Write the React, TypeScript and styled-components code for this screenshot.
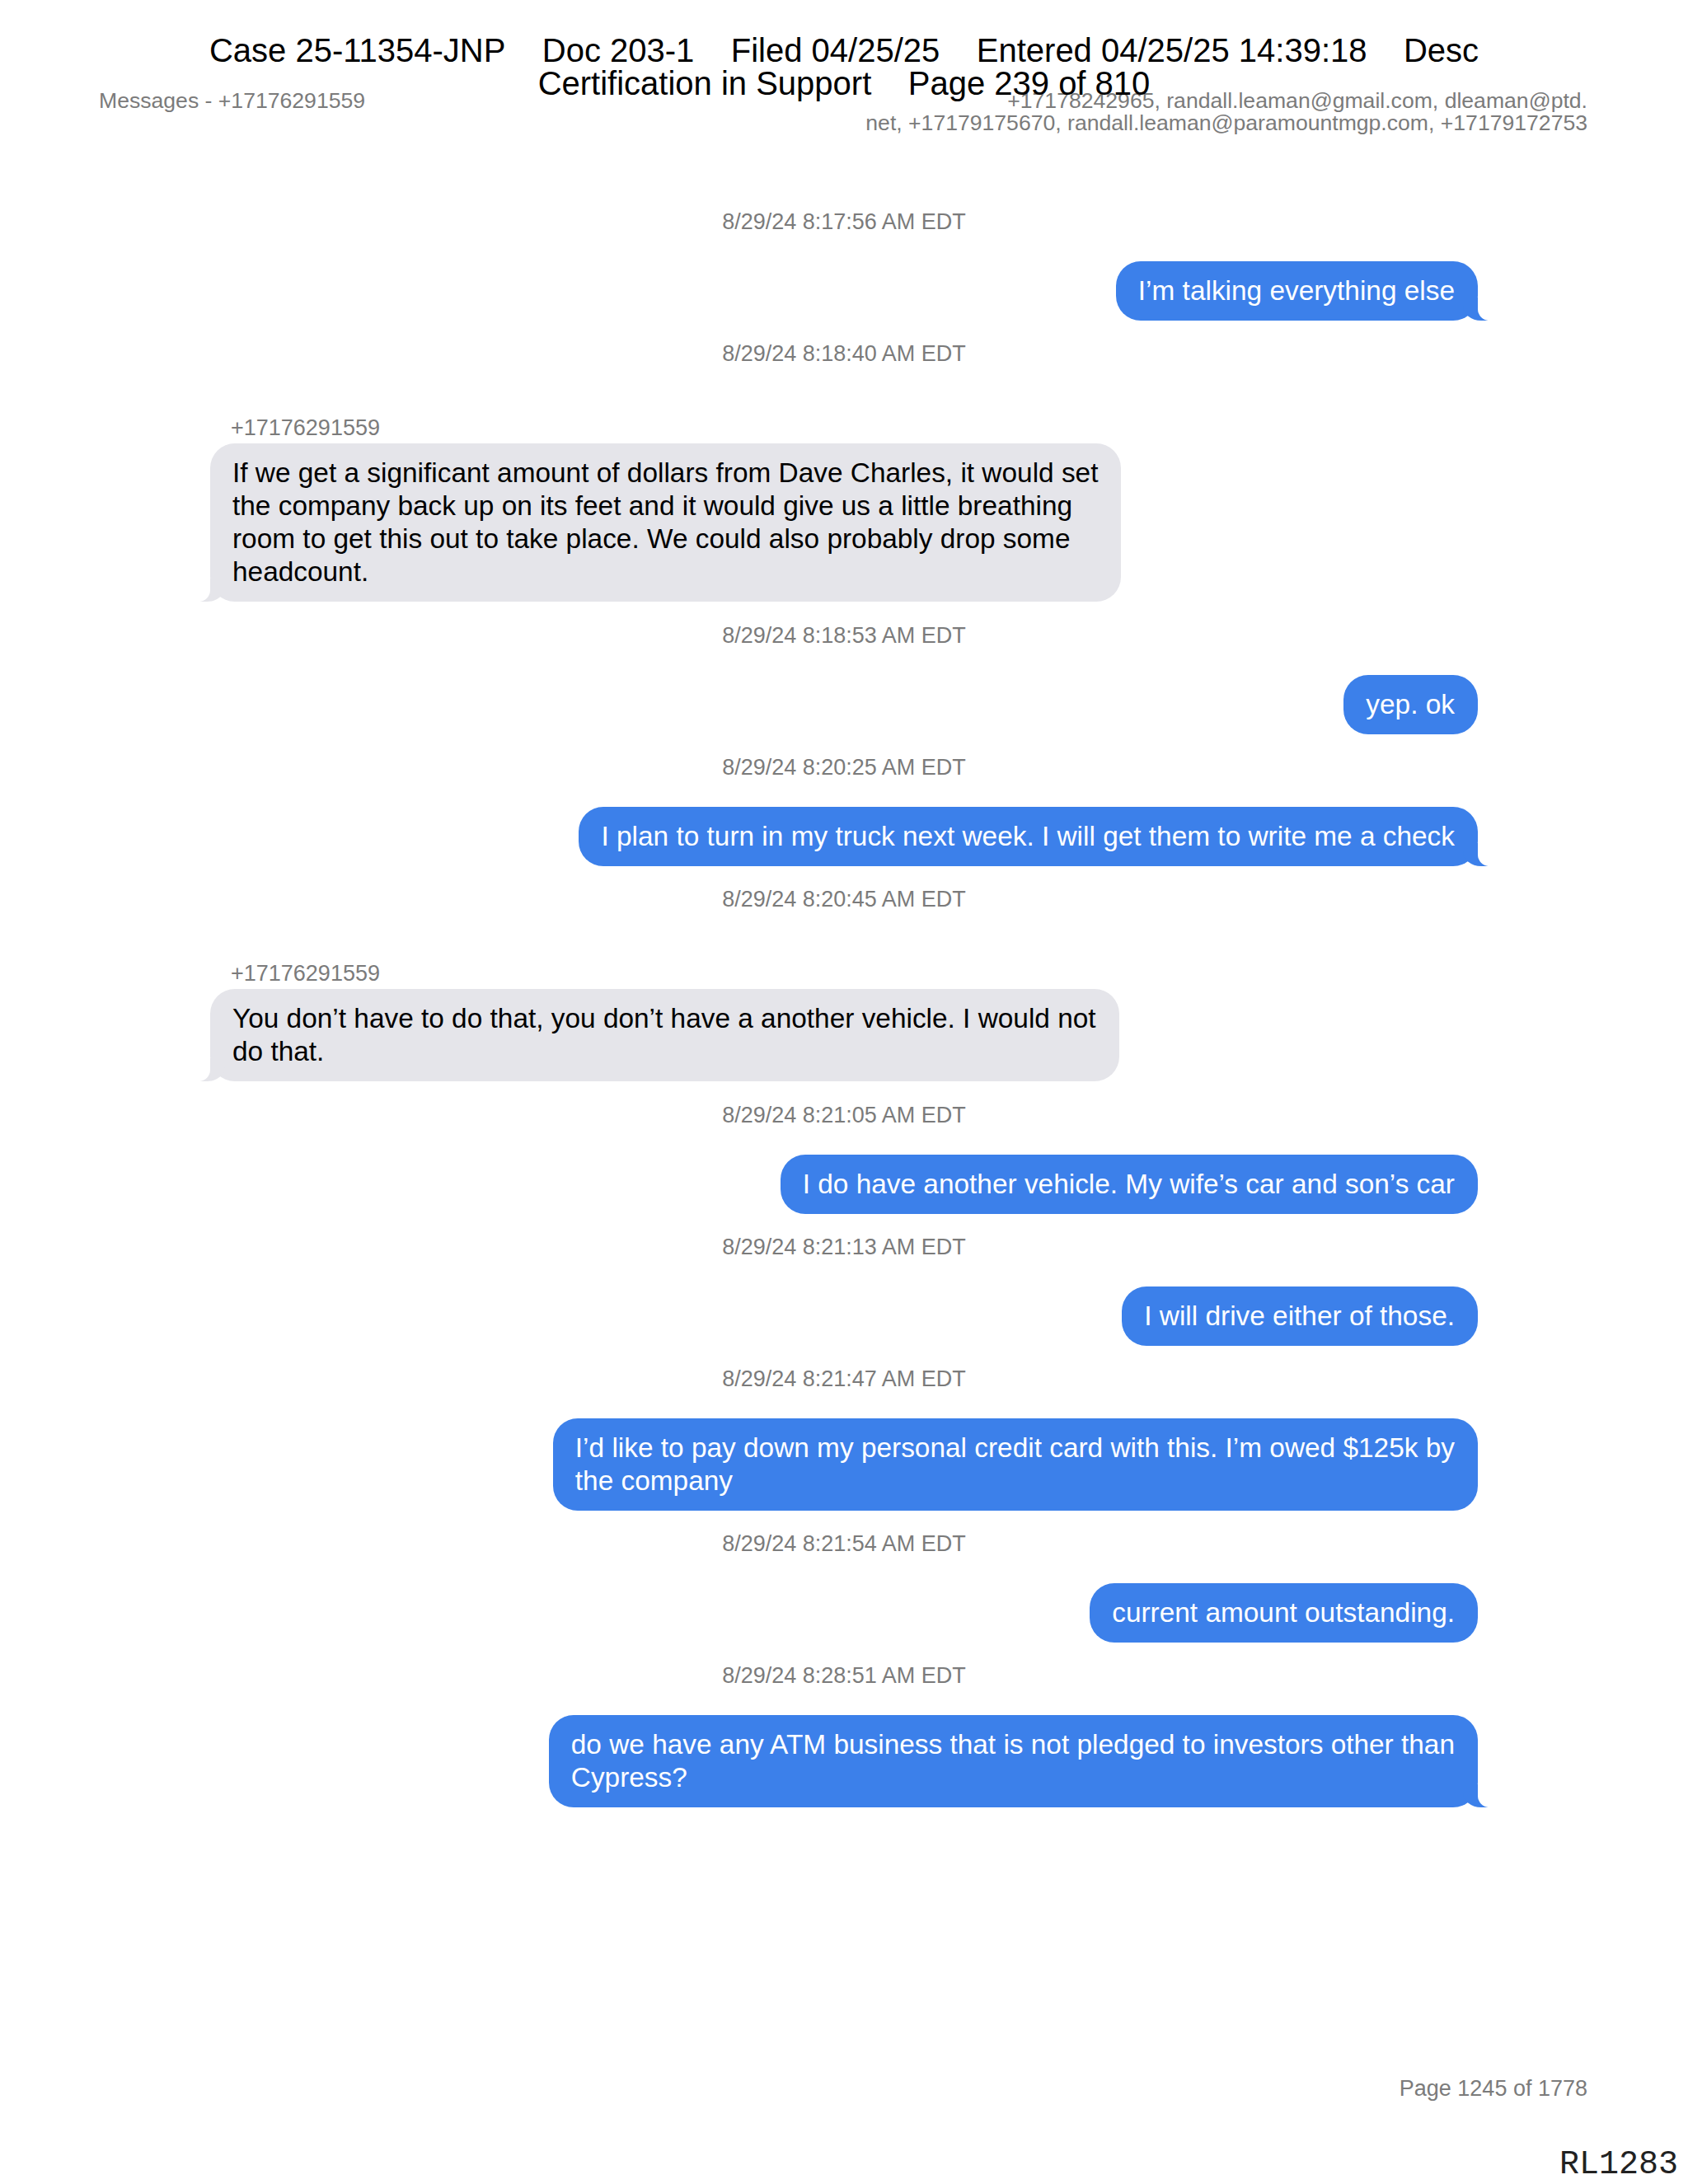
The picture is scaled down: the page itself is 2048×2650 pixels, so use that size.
import type { FC } from 'react'
import styled, { createGlobalStyle } from 'styled-components'

type Item =
	| { kind: 'time'; text: string }
	| { kind: 'out'; text: string; tail?: boolean }
	| { kind: 'in'; from: string; text: string }

const items: Item[] = [
	{ kind: 'time', text: '8/29/24 8:17:56 AM EDT' },
	{ kind: 'out', text: 'I’m talking everything else', tail: true },
	{ kind: 'time', text: '8/29/24 8:18:40 AM EDT' },
	{
		kind: 'in',
		from: '+17176291559',
		text: 'If we get a significant amount of dollars from Dave Charles, it would set\nthe company back up on its feet and it would give us a little breathing\nroom to get this out to take place. We could also probably drop some\nheadcount.',
	},
	{ kind: 'time', text: '8/29/24 8:18:53 AM EDT' },
	{ kind: 'out', text: 'yep. ok' },
	{ kind: 'time', text: '8/29/24 8:20:25 AM EDT' },
	{
		kind: 'out',
		text: 'I plan to turn in my truck next week. I will get them to write me a check',
		tail: true,
	},
	{ kind: 'time', text: '8/29/24 8:20:45 AM EDT' },
	{
		kind: 'in',
		from: '+17176291559',
		text: 'You don’t have to do that, you don’t have a another vehicle. I would not\ndo that.',
	},
	{ kind: 'time', text: '8/29/24 8:21:05 AM EDT' },
	{ kind: 'out', text: 'I do have another vehicle. My wife’s car and son’s car' },
	{ kind: 'time', text: '8/29/24 8:21:13 AM EDT' },
	{ kind: 'out', text: 'I will drive either of those.' },
	{ kind: 'time', text: '8/29/24 8:21:47 AM EDT' },
	{
		kind: 'out',
		text: 'I’d like to pay down my personal credit card with this. I’m owed $125k by\nthe company',
	},
	{ kind: 'time', text: '8/29/24 8:21:54 AM EDT' },
	{ kind: 'out', text: 'current amount outstanding.' },
	{ kind: 'time', text: '8/29/24 8:28:51 AM EDT' },
	{
		kind: 'out',
		text: 'do we have any ATM business that is not pledged to investors other than\nCypress?',
		tail: true,
	},
]

const App: FC = () => (
	<>
		<GlobalStyle />
		<Page>
			<CaseHeader>
				<div>
					Case 25-11354-JNP&nbsp;&nbsp;&nbsp;&nbsp;Doc 203-1&nbsp;&nbsp;&nbsp;&nbsp;Filed
					04/25/25&nbsp;&nbsp;&nbsp;&nbsp;Entered 04/25/25 14:39:18&nbsp;&nbsp;&nbsp;&nbsp;Desc
				</div>
				<div>Certification in Support&nbsp;&nbsp;&nbsp;&nbsp;Page 239 of 810</div>
			</CaseHeader>
			<MetaRow>
				<span>Messages - +17176291559</span>
				<Participants>
					+17178242965, randall.leaman@gmail.com, dleaman@ptd.
					<br />
					net, +17179175670, randall.leaman@paramountmgp.com, +17179172753
				</Participants>
			</MetaRow>
			<Thread>
				{items.map((item, idx) => {
					if (item.kind === 'time') {
						return <Stamp key={`t-${idx}`}>{item.text}</Stamp>
					}
					if (item.kind === 'in') {
						return (
							<Incoming key={`i-${idx}`}>
								<Sender>{item.from}</Sender>
								<Bubble $out={false} $tail>
									{item.text}
								</Bubble>
							</Incoming>
						)
					}
					return (
						<Outgoing key={`o-${idx}`}>
							<Bubble $out $tail={!!item.tail}>
								{item.text}
							</Bubble>
						</Outgoing>
					)
				})}
			</Thread>
			<Footer>
				<PageNo>Page 1245 of 1778</PageNo>
				<Bates>RL1283</Bates>
			</Footer>
		</Page>
	</>
)

export default App

const GlobalStyle = createGlobalStyle`
	html, body {
		margin: 0;
		padding: 0;
		background: #ffffff;
	}
	body {
		font-family: 'Liberation Sans', Arial, sans-serif;
	}
`

const Page = styled.div`
	width: 2048px;
	height: 2650px;
	display: flex;
	flex-direction: column;
	box-sizing: border-box;
	position: relative;
	overflow: hidden;
`

const CaseHeader = styled.div`
	position: absolute;
	top: 41px;
	left: 0;
	right: 0;
	text-align: center;
	font-size: 40px;
	line-height: 40px;
	color: #000;
	z-index: 2;
`

const MetaRow = styled.div`
	display: flex;
	justify-content: space-between;
	align-items: flex-start;
	padding: 109px 122px 0 120px;
	font-size: 26.6px;
	line-height: 27px;
	color: #7b7b7b;
`

const Participants = styled.div`
	text-align: right;
`

const Thread = styled.div`
	display: flex;
	flex-direction: column;
	padding: 91px 255px 0;
`

const Stamp = styled.div`
	text-align: center;
	font-size: 27px;
	line-height: 30px;
	color: #7b7b7b;
	margin-bottom: 33px;
`

const Outgoing = styled.div`
	display: flex;
	justify-content: flex-end;
	margin-bottom: 25px;
`

const Incoming = styled.div`
	display: flex;
	flex-direction: column;
	align-items: flex-start;
	margin-top: 27px;
	margin-bottom: 26px;
`

const Sender = styled.div`
	font-size: 27px;
	line-height: 30px;
	color: #7b7b7b;
	padding-left: 25px;
	margin-bottom: 4px;
`

const Bubble = styled.div<{ $out: boolean; $tail: boolean }>`
	position: relative;
	white-space: pre;
	font-size: 33.4px;
	line-height: 40px;
	padding: 16px 28px 16px 27px;
	border-radius: 30px;
	background: ${({ $out }) => ($out ? '#3c80ea' : '#e5e5ea')};
	color: ${({ $out }) => ($out ? '#ffffff' : '#000000')};

	${({ $tail, $out }) =>
		$tail
			? `
		&::before {
			content: '';
			position: absolute;
			bottom: 0;
			${$out ? 'right: -12px;' : 'left: -12px;'}
			width: 30px;
			height: 28px;
			background: ${$out ? '#3c80ea' : '#e5e5ea'};
			${$out ? 'border-bottom-left-radius: 22px 18px;' : 'border-bottom-right-radius: 22px 18px;'}
		}
		&::after {
			content: '';
			position: absolute;
			bottom: 0;
			${$out ? 'right: -30px;' : 'left: -30px;'}
			width: 30px;
			height: 30px;
			background: #ffffff;
			${$out ? 'border-bottom-left-radius: 14px;' : 'border-bottom-right-radius: 14px;'}
		}
	`
			: ''}
`

const Footer = styled.div`
	margin-top: auto;
	display: flex;
	flex-direction: column;
	align-items: flex-end;
	padding: 0 12px 3px 0;
`

const PageNo = styled.div`
	font-size: 27px;
	line-height: 30px;
	color: #7b7b7b;
	margin-right: 110px;
	margin-bottom: 58px;
`

const Bates = styled.div`
	font-family: 'Liberation Mono', 'Courier New', monospace;
	font-size: 40px;
	line-height: 40px;
	color: #222;
`
